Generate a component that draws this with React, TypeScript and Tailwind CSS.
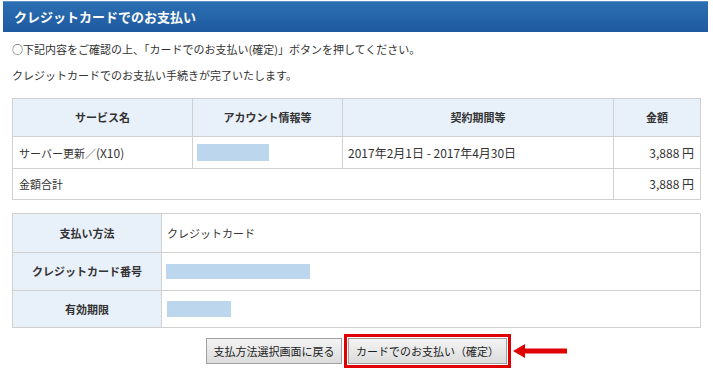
const font = { fontFamily: '"Noto Sans CJK JP", "Noto Sans", sans-serif' }

function Placeholder({ width }: { width: number }) {
  return <div className="h-[17px] bg-[#bcd6ee]" style={{ width }} />
}

function Btn({ children, className = '' }: { children: React.ReactNode; className?: string }) {
  return (
    <button
      className={`h-[26px] whitespace-nowrap border border-[#a0a0a0] bg-gradient-to-b from-[#f4f4f4] to-[#dcdcdc] text-[11px] leading-none text-[#222] ${className}`}
    >
      {children}
    </button>
  )
}

export default function App() {
  return (
    <div className="h-[380px] w-[713px] bg-white text-[11px] text-[#333]" style={font}>
      <div className="pt-px pl-[3px] pr-[5px]">
        <div className="flex h-[31px] items-center border-t border-[#5b8fc6] bg-gradient-to-b from-[#2c6fb2] to-[#1e5aa0] pl-[11px] text-[13px] font-bold text-white">
          クレジットカードでのお支払い
        </div>
      </div>

      <div className="mt-[4px] pl-[12px] leading-[26px]">
        <p>○下記内容をご確認の上、「カードでのお支払い(確定)」ボタンを押してください。</p>
        <p>クレジットカードでのお支払い手続きが完了いたします。</p>
      </div>

      <div className="ml-[12px] mt-[10px] w-[689px]">
        <table className="w-full table-fixed border-collapse">
          <colgroup>
            <col className="w-[180px]" />
            <col className="w-[150px]" />
            <col className="w-[271px]" />
            <col />
          </colgroup>
          <thead>
            <tr className="h-[38px] bg-[#e8f0fa] font-bold">
              <th className="border border-[#d0d0d0]">サービス名</th>
              <th className="border border-[#d0d0d0]">アカウント情報等</th>
              <th className="border border-[#d0d0d0]">契約期間等</th>
              <th className="border border-[#d0d0d0]">金額</th>
            </tr>
          </thead>
          <tbody>
            <tr className="h-[32px]">
              <td className="border border-[#d0d0d0] pl-[6px]">サーバー更新／<span className="text-[12px]">(X10)</span></td>
              <td className="border border-[#d0d0d0] pl-[4px]">
                <Placeholder width={72} />
              </td>
              <td className="border border-[#d0d0d0] pl-[5px] text-[12px]">2017年2月1日 - 2017年4月30日</td>
              <td className="border border-[#d0d0d0] pr-[6px] text-right text-[12px]">3,888 円</td>
            </tr>
            <tr className="h-[31px]">
              <td colSpan={3} className="border border-[#d0d0d0] pl-[6px]">金額合計</td>
              <td className="border border-[#d0d0d0] pr-[6px] text-right text-[12px]">3,888 円</td>
            </tr>
          </tbody>
        </table>

        <table className="mt-[13px] w-full table-fixed border-collapse">
          <colgroup>
            <col className="w-[149px]" />
            <col />
          </colgroup>
          <tbody>
            <tr className="h-[39px]">
              <th className="border border-[#d0d0d0] bg-[#e8f0fa] font-bold">支払い方法</th>
              <td className="border border-[#d0d0d0] pl-[5px]">クレジットカード</td>
            </tr>
            <tr className="h-[38px]">
              <th className="border border-[#d0d0d0] bg-[#e8f0fa] font-bold">クレジットカード番号</th>
              <td className="border border-[#d0d0d0] pl-[4px]">
                <div className="h-[15px] w-[144px] bg-[#bcd6ee]" />
              </td>
            </tr>
            <tr className="h-[37px]">
              <th className="border border-[#d0d0d0] bg-[#e8f0fa] font-bold">有効期限</th>
              <td className="border border-[#d0d0d0] pl-[5px]">
                <div className="h-[16px] w-[64px] bg-[#bcd6ee]" />
              </td>
            </tr>
          </tbody>
        </table>
      </div>

      <div className="mt-[6px] flex items-center pl-[206px]">
        <Btn className="w-[136px]">支払方法選択画面に戻る</Btn>
        <div className="ml-[2px] border-[3px] border-[#e00000] p-px">
          <Btn className="w-[159px]">カードでのお支払い（確定）</Btn>
        </div>
        <svg width="54" height="14" viewBox="0 0 54 14" className="ml-[2px]">
          <polygon points="0,7 12,0 12,4.5 54,4.5 54,9.5 12,9.5 12,14" fill="#e00000" />
        </svg>
      </div>
    </div>
  )
}
